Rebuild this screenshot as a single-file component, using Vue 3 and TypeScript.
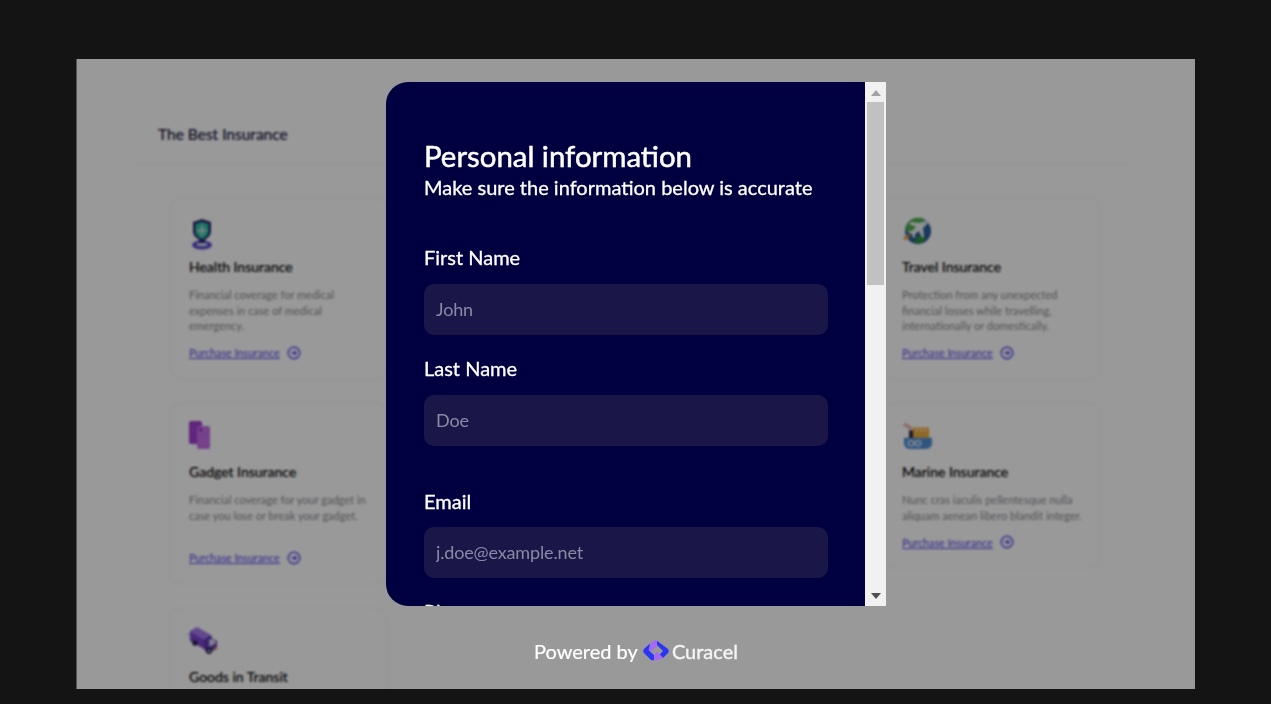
<template>
  <div class="screen">
    <main class="page">
      <header class="top">
        <h1>The Best Insurance</h1>
      </header>

      <section class="cards">
        <article
          v-for="card in cards"
          :key="card.title"
          class="card"
          :class="[card.col, { tall: card.tall }]"
        >
          <svg class="icon" viewBox="0 0 32 32" aria-hidden="true">
            <g v-if="card.icon === 'health'">
              <ellipse cx="16" cy="27" rx="10" ry="4.500" fill="#5a4bd0" />
              <ellipse cx="16" cy="26.500" rx="5.500" ry="1.800" fill="#d8d8ee" />
              <rect x="13" y="19" width="6" height="6" fill="#2c2a80" />
              <path d="M16 1l9 3v9c0 5-4 8-9 10-5-2-9-5-9-10V4z" fill="#2b2a70" />
              <path d="M16 4l6.500 2.200v7c0 3.500-3 6-6.500 7.500-3.500-1.500-6.500-4-6.500-7.500v-7z" fill="#2fc4a6" />
              <path d="M14.800 8h2.400v3.300h3.300v2.400h-3.300V17h-2.400v-3.300h-3.300v-2.400h3.300z" fill="#b8d8d8" />
            </g>
            <g v-else-if="card.icon === 'gadget'">
              <rect x="3" y="-2" width="13" height="23" rx="2" fill="#a13fd0" />
              <rect x="11" y="3" width="13" height="23" rx="2" fill="#c56de8" />
              <rect x="13" y="5" width="3" height="4" rx="1" fill="#a13fd0" />
            </g>
            <g v-else-if="card.icon === 'truck'">
              <path d="M1 5l3 1-2 2 3 1-2 2 3 1z" fill="#62c4ee" />
              <path d="M4 3l7-4 14 8-7 4z" fill="#a478ee" />
              <path d="M4 3l14 8v10L4 13z" fill="#7c46d2" />
              <path d="M18 11l7-4 1 3 5 3v8l-10 4-3-4z" fill="#5e3aae" />
              <path d="M23 12l4-1.500 2.500 2.500v3l-6.500 2.500z" fill="#d8cef5" />
              <circle cx="9" cy="15" r="2.800" fill="#2b2350" />
              <circle cx="23" cy="23" r="3" fill="#2b2350" />
              <circle cx="23" cy="23" r="1.200" fill="#d9d9d9" />
              <rect x="28" y="19" width="3" height="2" fill="#f07a3c" />
            </g>
            <g v-else-if="card.icon === 'globe'" transform="translate(2 -3)">
              <circle cx="17" cy="16" r="13" fill="#2a5f9c" />
              <path d="M8 7c4-5 11-5 15-3 1 4-3 5-5 6-1 3-4 3-4 6-3 1-6-1-9 1-1-4 0-7 3-10z" fill="#4fae4c" />
              <path d="M14 28c-1-4 2-7 6-7 3 0 5 1 5 3-3 3-7 5-11 4z" fill="#2f8f3c" />
              <path d="M25 6l2 2-5 5 1 8-2 2-3-7-4 3v3l-2 1-1-4-4-2 1-1 3 0 4-4-7-3 2-2 8 1z" fill="#eef1f4" />
              <path d="M2 24c2-3 5-5 8-6-1 2-2 3-2 5-2 2-4 2-6 1z" fill="#e3953a" />
            </g>
            <g v-else transform="translate(1 -2) scale(1 .93)">
              <path d="M3 4l8 5M5 2l7 6" stroke="#d88a80" stroke-width="1.200" fill="none" />
              <rect x="9" y="10" width="4" height="9" fill="#2c3040" />
              <rect x="13" y="7" width="16" height="12" fill="#f0ad3e" />
              <path d="M16 9h2v2h-2zM20 9h2v2h-2zM24 9h2v2h-2z" fill="#fdf0c8" />
              <path d="M4 18h28v6c0 4-3 6-6 6H9c-3 0-5-3-5-6z" fill="#4f8fd8" />
              <circle cx="11" cy="24" r="2.800" fill="none" stroke="#eaf2fb" stroke-width="1.300" />
              <circle cx="18" cy="24" r="2.800" fill="none" stroke="#eaf2fb" stroke-width="1.300" />
            </g>
          </svg>
          <h2>{{ card.title }}</h2>
          <p>{{ card.text }}</p>
          <a class="buy" href="#">
            <span>Purchase Insurance</span>
            <svg viewBox="0 0 16 16" aria-hidden="true">
              <circle cx="8" cy="8" r="6.600" fill="none" stroke="currentColor" stroke-width="1.600" />
              <path d="M4.800 8h5.800M8.300 5.700L10.600 8 8.300 10.300" fill="none" stroke="currentColor" stroke-width="1.600" />
            </svg>
          </a>
        </article>
      </section>

      <div class="overlay">
        <div class="modal">
          <form class="form" @submit.prevent>
            <h3>Personal information</h3>
            <p class="sub">Make sure the information below is accurate</p>
            <div
              v-for="field in fields"
              :key="field.label"
              class="field"
              :class="{ gapped: field.gapped }"
            >
              <label :for="field.id">{{ field.label }}</label>
              <input :id="field.id" type="text" :placeholder="field.placeholder" />
            </div>
          </form>
          <div class="scrollbar" aria-hidden="true">
            <i class="arrow up"></i>
            <div class="thumb"></div>
            <i class="arrow down"></i>
          </div>
        </div>

        <footer class="powered">
          <span>Powered by</span>
          <svg viewBox="0 0 26 22" aria-hidden="true">
            <path d="M7 3.500L1 9c-1 1.200-1 2.800 0 4l6.500 6.500c1.200 1 2.500 1 3.500 .5v-5l-5-4.500 3-3z" fill="#2b35f5" />
            <path d="M7 3.500l3.500-2.800c1.200-.8 2.500-.8 3.500 0v5.300l-5 5-3.500-.5z" fill="#a66bf2" />
            <path d="M14 .7L25 9c1 1.200 1 2.800 0 4l-5 5-3.500-3.500 3.500-3.500-6-6z" fill="#2b35f5" />
            <path d="M11 20c1 .6 2.500 .6 3.500 0l5.500-2-3.500-4-3-2-2.500 3z" fill="#a66bf2" />
          </svg>
          <strong>Curacel</strong>
        </footer>
      </div>
    </main>
  </div>
</template>

<script setup lang="ts">
type IconName = 'health' | 'gadget' | 'truck' | 'globe' | 'ship';

const cards: { title: string; text: string; icon: IconName; col: string; tall?: boolean }[] = [
  {
    title: 'Health Insurance',
    text: 'Financial coverage for medical expenses in case of medical emergency.',
    icon: 'health',
    col: 'left'
  },
  {
    title: 'Travel Insurance',
    text: 'Protection from any unexpected financial losses while travelling, internationally or domestically.',
    icon: 'globe',
    col: 'right'
  },
  {
    title: 'Gadget Insurance',
    text: 'Financial coverage for your gadget in case you lose or break your gadget.',
    icon: 'gadget',
    col: 'left',
    tall: true
  },
  {
    title: 'Marine Insurance',
    text: 'Nunc cras iaculis pellentesque nulla aliquam aenean libero blandit integer.',
    icon: 'ship',
    col: 'right'
  },
  {
    title: 'Goods in Transit',
    text: 'Financial coverage for goods moved from one place to another.',
    icon: 'truck',
    col: 'left'
  }
];

const fields = [
  { id: 'first', label: 'First Name', placeholder: 'John' },
  { id: 'last', label: 'Last Name', placeholder: 'Doe' },
  { id: 'email', label: 'Email', placeholder: 'j.doe@example.net', gapped: true },
  { id: 'phone', label: 'Phone', placeholder: '' }
];
</script>

<style>
html,
body {
  margin: 0;
  overflow: hidden;
  background: #141414;
}
</style>

<style scoped>
.screen {
  box-sizing: border-box;
  height: 704px;
  padding: 59px 76px 15px;
  font-family: Lato, "Open Sans", sans-serif;
}

.page {
  position: relative;
  height: 100%;
  overflow: hidden;
  background: #fff;
  border-left: 1px solid #555;
}

.top {
  box-sizing: border-box;
  height: 106px;
  margin: 0 65px 0 60px;
  padding: 65px 0 0 21px;
  border-bottom: 1px solid #f6f6f6;
}

h1 {
  margin: 0;
  font-size: 15.500px;
  line-height: 20px;
  font-weight: 400;
  -webkit-text-stroke: 0.200px #14143c;
  color: #14143c;
}

.cards {
  display: grid;
  grid-template-columns: 219px 1fr 219px;
  row-gap: 22.500px;
  align-items: start;
  margin: 32px 94px 0 92px;
}

.card {
  box-sizing: border-box;
  padding: 20px 18px 18px 19px;
  border: 1px solid #f6f6f6;
  border-radius: 14px;
}

.left {
  grid-column: 1;
}

.right {
  grid-column: 3;
}

.icon {
  display: block;
  width: 32px;
  height: 32px;
  margin-left: -3px;
  overflow: visible;
}

h2 {
  margin: 8px 0 0;
  font-size: 14px;
  line-height: 18px;
  font-weight: 400;
  -webkit-text-stroke: 0.200px #000;
  color: #000;
}

.card p {
  margin: 11px 0 0;
  font-size: 11px;
  line-height: 15.500px;
  color: #8e8e94;
}

.tall p {
  min-height: 46.500px;
}

.buy {
  display: flex;
  align-items: center;
  gap: 7px;
  height: 16px;
  margin-top: 11px;
  font-size: 10.700px;
  color: #5548f0;
}

.buy span {
  text-decoration: underline;
}

.buy svg {
  width: 14px;
  height: 14px;
}

.overlay {
  position: absolute;
  inset: 0;
  display: flex;
  flex-direction: column;
  align-items: center;
  padding-top: 23px;
  background: rgba(0, 0, 0, 0.4);
  backdrop-filter: blur(0.800px);
}

.modal {
  display: flex;
  width: 500px;
  height: 524px;
  flex: none;
  overflow: hidden;
  border-radius: 22px 0 0 22px;
  background: #000040;
}

.form {
  flex: 1;
  padding: 56px 37px 0 38px;
  color: #fff;
}

h3 {
  margin: 0;
  font-size: 29.400px;
  line-height: 36px;
  font-weight: 400;
  -webkit-text-stroke: 0.500px #fff;
}

.sub {
  margin: 0 0 44px;
  font-size: 20px;
  line-height: 26px;
  -webkit-text-stroke: 0.300px #fff;
}

.field {
  margin-bottom: 20px;
}

.gapped {
  margin-top: 42px;
}

.gapped label {
  margin-bottom: 13px;
}

label {
  display: block;
  margin-bottom: 14px;
  font-size: 20px;
  line-height: 26px;
  -webkit-text-stroke: 0.300px #fff;
}

.field input {
  display: block;
  box-sizing: border-box;
  width: 100%;
  height: 51px;
  padding: 0 12px 2px;
  border: 0;
  border-radius: 10px;
  background: #1a1748;
  font: inherit;
  font-size: 18px;
  letter-spacing: -0.150px;
  color: #fff;
}

.field input::placeholder {
  color: #8b89a3;
  opacity: 1;
}

.scrollbar {
  display: flex;
  flex-direction: column;
  align-items: center;
  width: 21px;
  flex: none;
  background: #f1f1f1;
}

.thumb {
  width: 17px;
  height: 183px;
  margin-top: 6px;
  background: #c1c1c1;
}

.arrow {
  width: 0;
  height: 0;
  border-left: 5px solid transparent;
  border-right: 5px solid transparent;
}

.arrow.up {
  margin-top: 8px;
  border-bottom: 6px solid #a3a3a3;
}

.arrow.down {
  margin-top: auto;
  margin-bottom: 7px;
  border-top: 6px solid #505050;
}

.powered {
  display: flex;
  align-items: center;
  margin-top: 32px;
  color: #fff;
  font-size: 20px;
  line-height: 26px;
  -webkit-text-stroke: 0.200px #fff;
}

.powered svg {
  width: 26px;
  height: 22px;
  margin: 0 3px 0 5px;
}

.powered strong {
  font-weight: 400;
  color: #f4f4f4;
  -webkit-text-stroke: 0.400px #f4f4f4;
}
</style>
